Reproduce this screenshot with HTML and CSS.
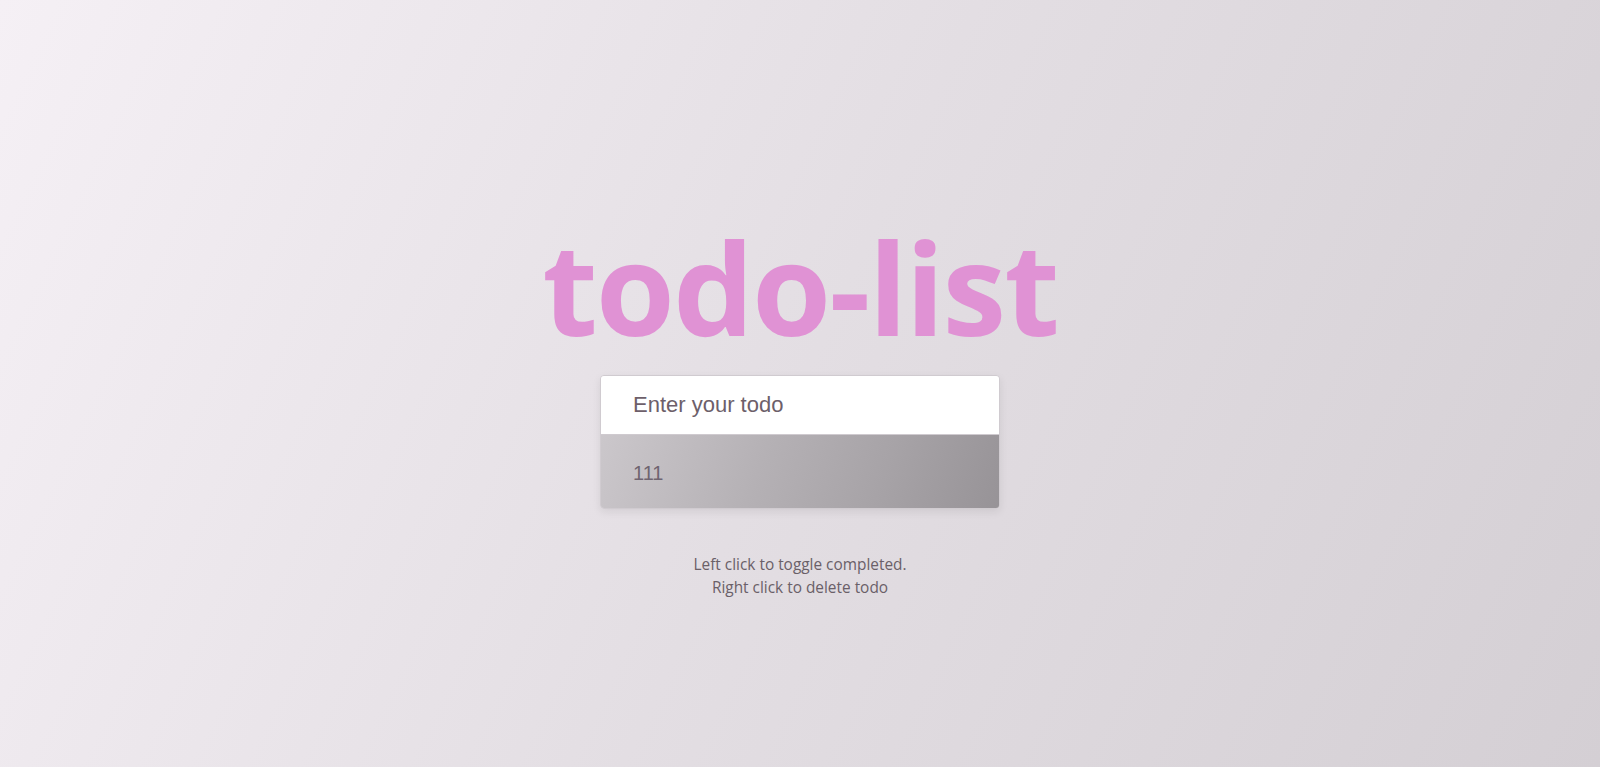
FILE: index.html
```html
<!DOCTYPE html>
<html lang="en">
<head>
<meta charset="UTF-8">
<title>todo-list</title>
<link rel="stylesheet" href="styles.css">
</head>
<body>
  <main class="app">
    <h1 class="title">todo-list</h1>
    <form class="todo-form">
      <input class="todo-input" type="text" placeholder="Enter your todo" autocomplete="off">
      <ul class="todos">
        <li class="todo">111</li>
      </ul>
    </form>
    <p class="hint">Left click to toggle completed.<br>Right click to delete todo</p>
  </main>
</body>
</html>
```
FILE: styles.css
```css
* { box-sizing: border-box; }
html, body { height: 100%; }
body {
  margin: 0;
  background: linear-gradient(115deg, #f5f0f5 0%, #e3dee3 50%, #d4cfd4 100%);
  font-family: "Open Sans", "Noto Sans", sans-serif;
  overflow: hidden;
}
.app {
  height: 100%;
  display: flex;
  flex-direction: column;
  align-items: center;
  justify-content: center;
  padding-top: 54px;
}
.title {
  margin: 0;
  font-size: 128px;
  font-weight: 700;
  line-height: 1;
  color: #e092d4;
  letter-spacing: -2px;
}
.todo-form {
  margin-top: 24px;
  width: 400px;
  border-radius: 4px;
  overflow: hidden;
  box-shadow: 0 3px 8px rgba(0,0,0,0.08);
  border: 1px solid #d0cbd0;
}
.todo-input {
  display: block;
  width: 100%;
  height: 59px;
  border: none;
  border-bottom: 1px solid #cfcacf;
  padding: 0 32px;
  font-family: "Liberation Sans", Arial, sans-serif;
  font-size: 22px;
  color: #6d5f6a;
  background: #fff;
  outline: none;
}
.todo-input::placeholder { color: #6d5f6a; opacity: 1; }
.todos {
  list-style: none;
  margin: 0;
  padding: 0;
}
.todo {
  height: 73px;
  display: flex;
  align-items: center;
  padding: 5px 32px 0;
  font-family: "Liberation Sans", Arial, sans-serif;
  font-size: 20px;
  color: #6f6470;
  background: linear-gradient(110deg, #cbc7cb 0%, #b5b1b5 40%, #a7a3a7 70%, #979397 100%);
}
.hint {
  margin: 44px 0 0;
  text-align: center;
  font-family: "Open Sans", "Noto Sans", sans-serif;
  font-size: 15.4px;
  line-height: 23px;
  color: #6a6068;
}
```
